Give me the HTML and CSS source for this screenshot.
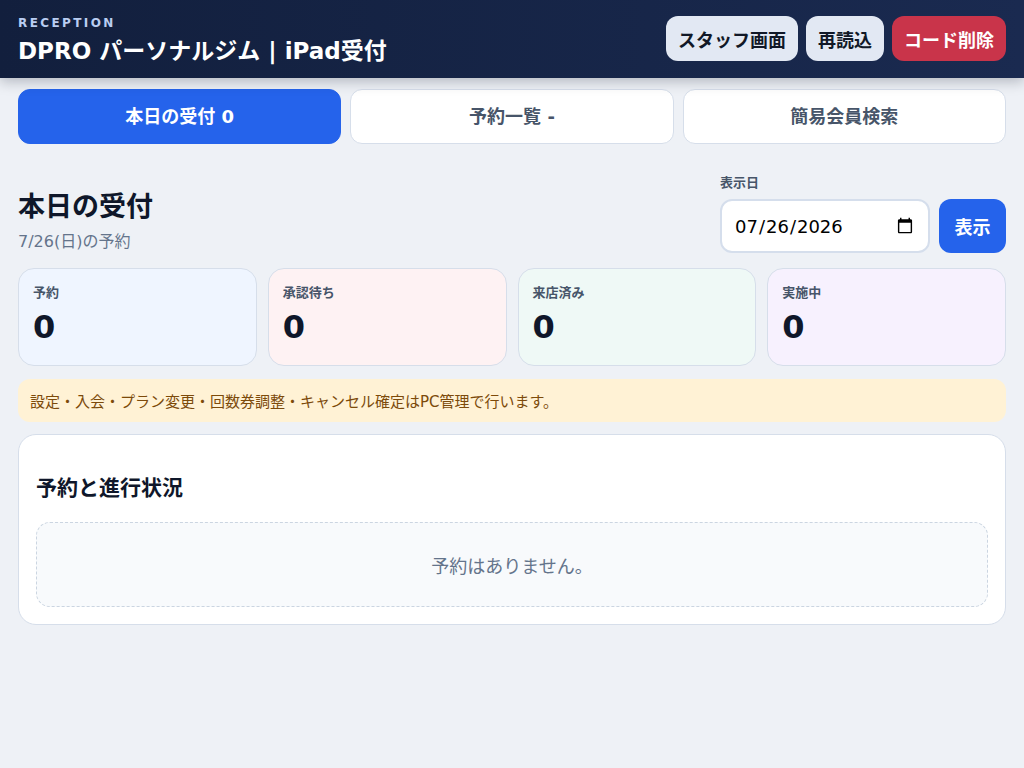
FILE: index.html
```html
<!DOCTYPE html>
<html lang="ja">
<head>
<meta charset="utf-8">
<title>DPRO パーソナルジム | iPad受付</title>
<link rel="stylesheet" href="styles.css">
</head>
<body>
<header class="topbar">
  <div class="brand">
    <div class="eyebrow">RECEPTION</div>
    <h1 class="title">DPRO パーソナルジム | iPad受付</h1>
  </div>
  <div class="actions">
    <button class="btn btn-light">スタッフ画面</button>
    <button class="btn btn-light">再読込</button>
    <button class="btn btn-danger">コード削除</button>
  </div>
</header>
<main class="main">
  <nav class="tabs">
    <button class="tab active">本日の受付 0</button>
    <button class="tab">予約一覧 -</button>
    <button class="tab">簡易会員検索</button>
  </nav>
  <section class="toolbar">
    <div class="heading">
      <h2 class="h2">本日の受付</h2>
      <div class="sub">7/26(日)の予約</div>
    </div>
    <div class="datebox">
      <label class="label">表示日</label>
      <div class="daterow">
        <input class="dateinput" type="date" value="2026-07-26">
        <button class="btn-show">表示</button>
      </div>
    </div>
  </section>
  <section class="stats">
    <div class="stat s-blue"><div class="stat-label">予約</div><div class="stat-num">0</div></div>
    <div class="stat s-red"><div class="stat-label">承認待ち</div><div class="stat-num">0</div></div>
    <div class="stat s-green"><div class="stat-label">来店済み</div><div class="stat-num">0</div></div>
    <div class="stat s-purple"><div class="stat-label">実施中</div><div class="stat-num">0</div></div>
  </section>
  <div class="notice">設定・入会・プラン変更・回数券調整・キャンセル確定はPC管理で行います。</div>
  <section class="panel">
    <h3 class="panel-title">予約と進行状況</h3>
    <div class="empty">予約はありません。</div>
  </section>
</main>
</body>
</html>
```
FILE: styles.css
```css
* { box-sizing: border-box; }
html, body { margin: 0; padding: 0; }
body {
  background: #eef1f6;
  font-family: "DejaVu Sans", "Noto Sans CJK JP", sans-serif;
  color: #0f172a;
}
button { font-family: inherit; cursor: pointer; }

.topbar {
  height: 78px;
  background: linear-gradient(90deg, #121f3d 0%, #1a2a50 100%);
  display: flex;
  align-items: center;
  justify-content: space-between;
  padding: 0 18px;
  box-shadow: 0 4px 12px rgba(15, 23, 42, 0.25);
  position: relative;
  z-index: 1;
}
.brand { margin-top: 3px; }
.eyebrow {
  font-size: 12px;
  font-weight: 700;
  letter-spacing: 2.4px;
  color: #b9cdf2;
  line-height: 14px;
}
.title {
  margin: 7px 0 0;
  font-size: 23px;
  font-weight: 700;
  color: #ffffff;
  line-height: 28px;
}
.actions { display: flex; gap: 8px; margin-top: -1px; }
.btn {
  height: 45px;
  border: none;
  border-radius: 12px;
  padding: 0 12px;
  font-size: 18px;
  font-weight: 700;
}
.btn-light { background: #e2e8f3; color: #111827; }
.btn-danger { background: #c9344a; color: #ffffff; }

.main { padding: 11px 18px 20px; }

.tabs {
  display: grid;
  grid-template-columns: 1fr 1fr 1fr;
  gap: 9px;
}
.tab {
  height: 55px;
  border-radius: 12px;
  border: 1px solid #d6deea;
  background: #ffffff;
  color: #475569;
  font-size: 18px;
  font-weight: 700;
  padding-bottom: 4px;
}
.tab.active { background: #2563eb; border-color: #2563eb; color: #ffffff; }

.toolbar {
  display: flex;
  justify-content: space-between;
  align-items: flex-end;
  margin-top: 30px;
}
.h2 {
  margin: 0;
  font-size: 27px;
  font-weight: 700;
  line-height: 34px;
  color: #0f172a;
}
.sub {
  margin-top: 8px;
  font-size: 16px;
  color: #64748b;
  line-height: 20px;
  margin-bottom: 1px;
}
.datebox { display: flex; flex-direction: column; }
.label {
  font-size: 13px;
  font-weight: 700;
  color: #475569;
  line-height: 18px;
  margin-bottom: 7px;
}
.daterow { display: flex; gap: 9px; align-items: center; }
.dateinput {
  width: 210px;
  height: 54px;
  border: 2px solid #d5deec;
  border-radius: 12px;
  background: #ffffff;
  padding: 0 12px 0 12px;
  font-family: "DejaVu Sans", sans-serif;
  font-size: 18px;
  color: #000000;
}
.btn-show {
  width: 67px;
  height: 54px;
  border: none;
  border-radius: 12px;
  background: #2563eb;
  color: #ffffff;
  font-size: 18px;
  font-weight: 700;
}

.stats {
  display: grid;
  grid-template-columns: repeat(4, 1fr);
  gap: 11px;
  margin-top: 15px;
}
.stat {
  height: 98px;
  border: 1px solid #d6deea;
  border-radius: 16px;
  padding: 15px 14px;
}
.s-blue { background: #eff5ff; }
.s-red { background: #fef2f3; }
.s-green { background: #eff9f6; }
.s-purple { background: #f7f1fe; }
.stat-label {
  font-size: 13px;
  font-weight: 700;
  color: #475569;
  line-height: 18px;
}
.stat-num {
  margin-top: 6px;
  font-size: 32px;
  font-weight: 700;
  color: #0f172a;
  line-height: 38px;
}

.notice {
  margin-top: 13px;
  height: 43px;
  background: #fff2d5;
  border-radius: 12px;
  padding: 0 12px;
  display: flex;
  align-items: center;
  font-size: 15px;
  color: #7c4a0a;
}

.panel {
  margin-top: 12px;
  background: #ffffff;
  border: 1px solid #d6deea;
  border-radius: 18px;
  padding: 39px 17px 17px;
}
.panel-title {
  margin: 0 0 20px;
  font-size: 21px;
  font-weight: 700;
  line-height: 28px;
  color: #0f172a;
}
.empty {
  height: 85px;
  border: 1px dashed #cbd5e1;
  border-radius: 14px;
  background: #f8fafc;
  display: flex;
  align-items: center;
  justify-content: center;
  font-size: 18px;
  color: #64748b;
}
```
